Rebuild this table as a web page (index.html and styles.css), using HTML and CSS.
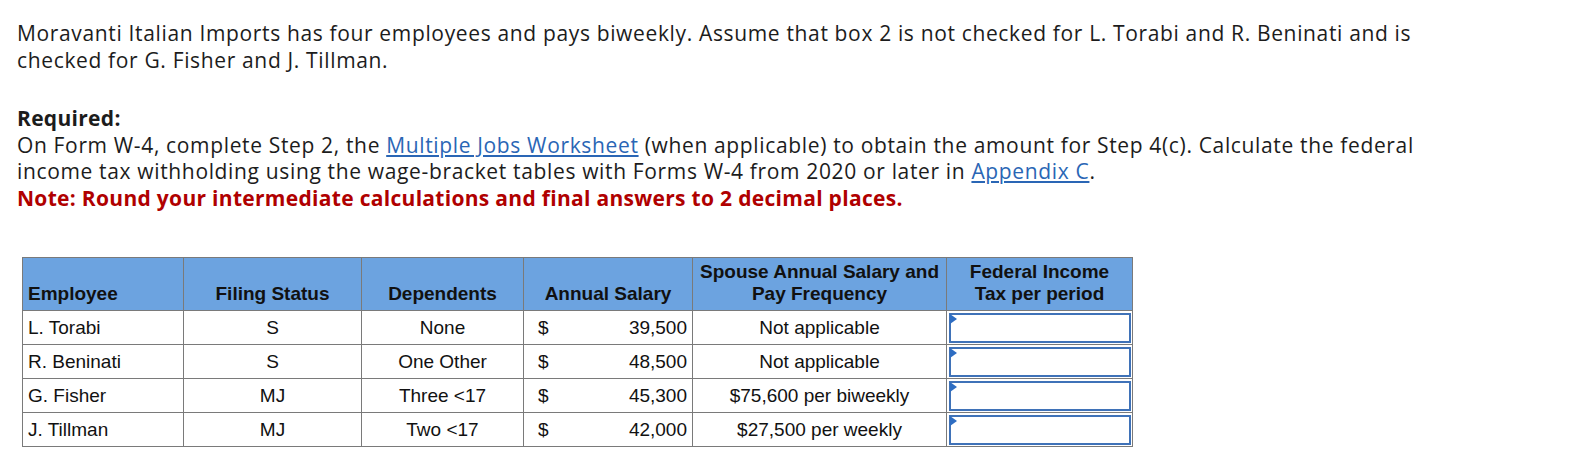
FILE: index.html
```html
<!DOCTYPE html>
<html>
<head>
<meta charset="utf-8">
<link rel="stylesheet" href="styles.css">
</head>
<body>
<div class="question">
  <p class="intro">Moravanti Italian Imports has four employees and pays biweekly. Assume that box 2 is not checked for L. Torabi and R. Beninati and is checked for G. Fisher and J. Tillman.</p>
  <div class="required">
    <div class="req-title">Required:</div>
    <div>On Form W-4, complete Step 2, the <a class="link" href="#">Multiple Jobs Worksheet</a> (when applicable) to obtain the amount for Step 4(c). Calculate the federal income tax withholding using the wage-bracket tables with Forms W-4 from 2020 or later in <a class="link" href="#">Appendix C</a>.</div>
    <div class="note">Note: Round your intermediate calculations and final answers to 2 decimal places.</div>
  </div>
  <table class="grid">
    <colgroup>
      <col class="c1"><col class="c2"><col class="c3"><col class="c4"><col class="c5"><col class="c6">
    </colgroup>
    <thead>
      <tr>
        <th class="left">Employee</th>
        <th>Filing Status</th>
        <th>Dependents</th>
        <th>Annual Salary</th>
        <th>Spouse Annual Salary and<br>Pay Frequency</th>
        <th>Federal Income<br>Tax per period</th>
      </tr>
    </thead>
    <tbody>
      <tr>
        <td class="left">L. Torabi</td><td>S</td><td>None</td>
        <td class="money"><span class="dollar">$</span><span class="amount">39,500</span></td>
        <td>Not applicable</td>
        <td class="entry"><div class="box"><span class="flag"></span></div></td>
      </tr>
      <tr>
        <td class="left">R. Beninati</td><td>S</td><td>One Other</td>
        <td class="money"><span class="dollar">$</span><span class="amount">48,500</span></td>
        <td>Not applicable</td>
        <td class="entry"><div class="box"><span class="flag"></span></div></td>
      </tr>
      <tr>
        <td class="left">G. Fisher</td><td>MJ</td><td>Three &lt;17</td>
        <td class="money"><span class="dollar">$</span><span class="amount">45,300</span></td>
        <td>$75,600 per biweekly</td>
        <td class="entry"><div class="box"><span class="flag"></span></div></td>
      </tr>
      <tr>
        <td class="left">J. Tillman</td><td>MJ</td><td>Two &lt;17</td>
        <td class="money"><span class="dollar">$</span><span class="amount">42,000</span></td>
        <td>$27,500 per weekly</td>
        <td class="entry"><div class="box"><span class="flag"></span></div></td>
      </tr>
    </tbody>
  </table>
</div>
</body>
</html>
```

FILE: styles.css
```css
html, body {
  margin: 0;
  padding: 0;
  background: #ffffff;
}

.question {
  padding: 20px 0 0 17px;
  font-family: "Open Sans", Lato, sans-serif;
  font-size: 21px;
  letter-spacing: 0.65px;
  line-height: 26.5px;
  color: #1c1c1c;
}

.intro {
  margin: 0;
  width: 1440px;
}

.required {
  margin-top: 32px;
  width: 1440px;
}

.req-title {
  font-weight: bold;
  letter-spacing: 0.3px;
}

.link {
  color: #2a66b5;
  text-decoration: underline;
}

.note {
  color: #b00000;
  font-weight: bold;
  letter-spacing: 0.3px;
}

.grid {
  margin: 46px 0 0 5px;
  border-collapse: collapse;
  table-layout: fixed;
  font-family: "Liberation Sans", Arial, sans-serif;
  font-size: 19px;
  letter-spacing: 0;
  line-height: 22px;
  color: #111111;
}

.c1 { width: 161px; }
.c2 { width: 178px; }
.c3 { width: 162px; }
.c4 { width: 169px; }
.c5 { width: 254px; }
.c6 { width: 186px; }

.grid th,
.grid td {
  border: 1px solid #7a7a7a;
  text-align: center;
  padding: 0 5px;
}

.grid th {
  background: #6ca3e0;
  height: 53px;
  vertical-align: bottom;
  padding-bottom: 5px;
  font-weight: bold;
  box-sizing: border-box;
}

.grid td {
  height: 34px;
  box-sizing: border-box;
  vertical-align: middle;
}

.grid .left {
  text-align: left;
}

.money .dollar {
  float: left;
  padding-left: 9px;
}

.money .amount {
  float: right;
}

.grid td.entry {
  padding: 2px 1px 1px 2px;
}

.box {
  position: relative;
  height: 30px;
  border: 2px solid #3f72b8;
  box-sizing: border-box;
  background: #ffffff;
}

.flag {
  position: absolute;
  left: -1px;
  top: -1px;
  width: 0;
  height: 0;
  border-left: 7px solid #2e6dc2;
  border-top: 5px solid transparent;
  border-bottom: 5px solid transparent;
}
```
